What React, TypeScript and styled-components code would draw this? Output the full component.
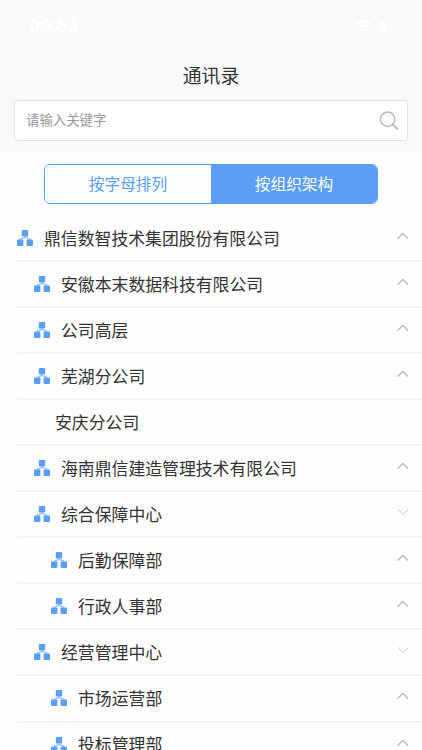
import styled, { createGlobalStyle } from "styled-components";

const GlobalStyle = createGlobalStyle`
  * {
    box-sizing: border-box;
  }

  body {
    margin: 0;
    background-color: #fefefe;
    font-family: "Noto Sans CJK SC", sans-serif;
    color: #333333;
    overflow: hidden;
  }

  button,
  input {
    font-family: inherit;
  }
`;

const Page = styled.div`
  height: 750px;
  overflow: hidden;
  display: flex;
  flex-direction: column;
`;

const StatusBar = styled.div`
  flex: none;
  height: 52px;
  padding: 0 18px 0 29px;
  display: flex;
  align-items: center;
  justify-content: space-between;
  background-color: #f9f9f9;
  color: #ffffff;

  .time {
    font-family: Inter, sans-serif;
    font-size: 17px;
    font-weight: 600;
  }

  .signals {
    display: flex;
    align-items: center;
    gap: 6px;
  }
`;

const TitleBar = styled.header`
  flex: none;
  height: 48px;
  padding-bottom: 2px;
  display: flex;
  align-items: center;
  justify-content: center;
  background-color: #f9f9f9;
  border-bottom: 1px solid #f4f4f4;

  h1 {
    margin: 0;
    font-size: 18.8px;
    line-height: 28px;
    font-weight: 400;
  }
`;

const SearchArea = styled.div`
  flex: none;
  height: 52px;
  padding: 0 14px;
  background-color: #f9f9f9;
`;

const SearchBox = styled.label`
  height: 41px;
  padding: 0 8px 0 11px;
  display: flex;
  align-items: center;
  background-color: #ffffff;
  border: 1px solid #e3e3e5;
  border-radius: 4px;

  input {
    flex: 1;
    min-width: 0;
    height: 20px;
    margin-bottom: 3px;
    padding: 0;
    border: none;
    outline: none;
    background: none;
    font-size: 13.4px;
    line-height: 20px;
  }

  input::placeholder {
    color: #999999;
    opacity: 1;
  }
`;

const Tabs = styled.div`
  flex: none;
  width: 334px;
  height: 40px;
  margin: 12px 0 12px 44px;
  display: flex;
  border: 1px solid #5a9ef8;
  border-radius: 6px;
  overflow: hidden;
`;

const Tab = styled.button<{ $active?: boolean }>`
  flex: 1;
  padding: 0 0 1px;
  border: none;
  font-size: 15.7px;
  line-height: 24px;
  color: ${({ $active }) => ($active ? "#ffffff" : "#5a9ef8")};
  background-color: ${({ $active }) => ($active ? "#5a9ef8" : "#fefefe")};
`;

const List = styled.ul`
  flex: none;
  margin: 0;
  padding: 0 0 0 17px;
  list-style: none;
`;

const Row = styled.li<{ $indent: number }>`
  height: 46.05px;
  padding: 0 13px 0 ${({ $indent }) => $indent}px;
  display: flex;
  align-items: center;
  border-bottom: 2px solid #f3f3f3;

  .name {
    flex: 1;
    margin-bottom: 1px;
    font-size: 16.85px;
    line-height: 26px;
    white-space: nowrap;
  }

  .org {
    flex: none;
    margin-right: 11px;
  }

  .arrow {
    margin-bottom: 4px;
  }
`;

const OrgIcon = () => (
  <svg className="org" width="16" height="16" viewBox="0 0 16 16">
    <path d="M8 6v2M3.2 10.5V9.2L8 7.4l4.8 1.8v1.3" fill="none" stroke="#8fbdfa" strokeWidth="1.2" />
    <g fill="#5a9ef8">
      <rect x="4.8" y="0" width="6.4" height="6.4" rx="1" />
      <rect x="0" y="9.6" width="6.4" height="6.4" rx="1" />
      <rect x="9.6" y="9.6" width="6.4" height="6.4" rx="1" />
    </g>
  </svg>
);

const Arrow = ({ down }: { down?: boolean }) => (
  <svg className="arrow" width="12" height="8" viewBox="0 0 12 8" fill="none">
    <path
      d={down ? "M1.2 1.6 6.2 6.4 11.2 1.6" : "M.6 6.6 5.8 1.4 11 6.6"}
      stroke={down ? "#c0c0c0" : "#b0b0b0"}
      strokeWidth={down ? 1 : 1.3}
    />
  </svg>
);

const SearchIcon = () => (
  <svg width="20" height="20" viewBox="0 0 20 20" fill="none" stroke="#b9bbc0">
    <circle cx="8.6" cy="8.2" r="7.2" strokeWidth="1.5" />
    <path d="M13.8 13.4 18.2 17.8" strokeWidth="2.2" strokeLinecap="round" />
  </svg>
);

const WifiIcon = () => (
  <svg width="17" height="12" viewBox="0 0 17 12" fill="none" stroke="#ffffff" strokeWidth="2.2">
    <path d="M1 4.3a10.8 10.8 0 0 1 15 0M3.8 7.2a6.8 6.8 0 0 1 9.4 0" />
    <path d="M8.5 12 6 9.4a3.6 3.6 0 0 1 5 0z" fill="#ffffff" stroke="none" />
  </svg>
);

const BatteryIcon = () => (
  <svg width="26" height="13" viewBox="0 0 26 13" fill="none">
    <rect x="0.5" y="0.5" width="22" height="12" rx="3.5" stroke="#fbfbfb" />
    <rect x="2" y="2" width="6" height="9" rx="2" fill="#ffffff" />
    <rect x="24" y="4.5" width="1.2" height="4" rx="0.6" fill="#fbfbfb" />
  </svg>
);

type Department = {
  name: string;
  level: number;
  open?: boolean;
  leaf?: boolean;
};

const departments: Department[] = [
  { name: "鼎信数智技术集团股份有限公司", level: 0 },
  { name: "安徽本末数据科技有限公司", level: 1 },
  { name: "公司高层", level: 1 },
  { name: "芜湖分公司", level: 1 },
  { name: "安庆分公司", level: 1, leaf: true },
  { name: "海南鼎信建造管理技术有限公司", level: 1 },
  { name: "综合保障中心", level: 1, open: true },
  { name: "后勤保障部", level: 2 },
  { name: "行政人事部", level: 2 },
  { name: "经营管理中心", level: 1, open: true },
  { name: "市场运营部", level: 2 },
  { name: "投标管理部", level: 2 },
];

const App = () => {
  return (
    <Page>
      <GlobalStyle />
      <StatusBar>
        <span className="time">09:53</span>
        <div className="signals">
          <WifiIcon />
          <BatteryIcon />
        </div>
      </StatusBar>
      <TitleBar>
        <h1>通讯录</h1>
      </TitleBar>
      <SearchArea>
        <SearchBox>
          <input placeholder="请输入关键字" />
          <SearchIcon />
        </SearchBox>
      </SearchArea>
      <Tabs>
        <Tab>按字母排列</Tab>
        <Tab $active>按组织架构</Tab>
      </Tabs>
      <List>
        {departments.map(({ name, level, open, leaf }) => (
          <Row key={name} $indent={leaf ? 38 : level * 17}>
            {!leaf && <OrgIcon />}
            <span className="name">{name}</span>
            {!leaf && <Arrow down={open} />}
          </Row>
        ))}
      </List>
    </Page>
  );
};

export default App;
